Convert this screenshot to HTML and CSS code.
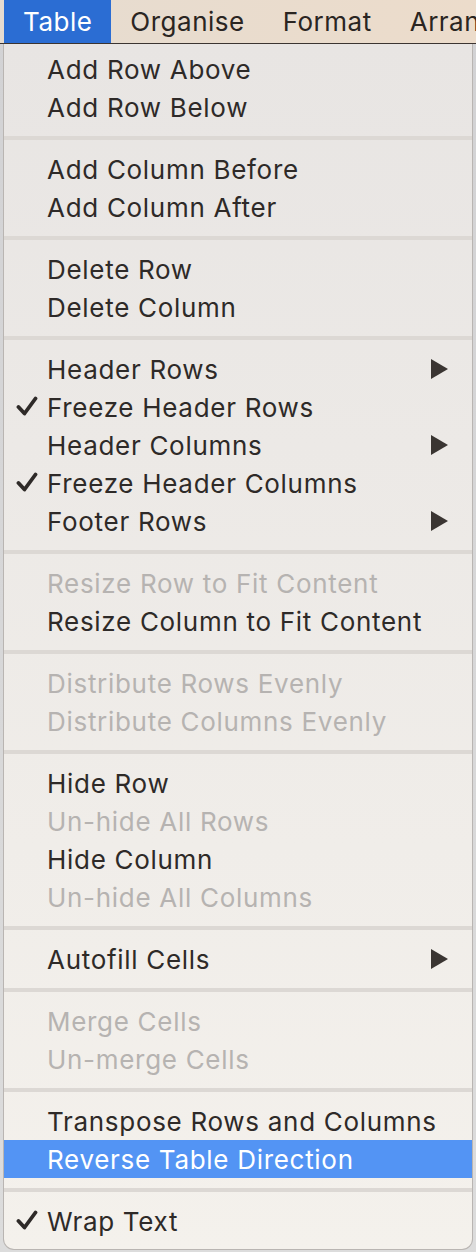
FILE: index.html
```html
<!DOCTYPE html>
<html>
<head>
<meta charset="utf-8">
<link rel="stylesheet" href="styles.css">
</head>
<body>
<div class="menubar">
  <div class="mb-item active">Table</div>
  <div class="mb-item">Organise</div>
  <div class="mb-item">Format</div>
  <div class="mb-item">Arrange</div>
</div>
<div class="menu">
  <div class="item">Add Row Above</div>
  <div class="item">Add Row Below</div>
  <div class="sep"></div>
  <div class="item">Add Column Before</div>
  <div class="item">Add Column After</div>
  <div class="sep"></div>
  <div class="item">Delete Row</div>
  <div class="item">Delete Column</div>
  <div class="sep"></div>
  <div class="item">Header Rows<span class="arrow"></span></div>
  <div class="item"><svg class="check" viewBox="0 0 22 20" width="22" height="20"><path d="M2.5 11 L8.5 17.5 L19.5 2.5" fill="none" stroke="#2e2a28" stroke-width="3.8" stroke-linecap="round" stroke-linejoin="round"/></svg>Freeze Header Rows</div>
  <div class="item">Header Columns<span class="arrow"></span></div>
  <div class="item"><svg class="check" viewBox="0 0 22 20" width="22" height="20"><path d="M2.5 11 L8.5 17.5 L19.5 2.5" fill="none" stroke="#2e2a28" stroke-width="3.8" stroke-linecap="round" stroke-linejoin="round"/></svg>Freeze Header Columns</div>
  <div class="item">Footer Rows<span class="arrow"></span></div>
  <div class="sep"></div>
  <div class="item disabled">Resize Row to Fit Content</div>
  <div class="item">Resize Column to Fit Content</div>
  <div class="sep"></div>
  <div class="item disabled">Distribute Rows Evenly</div>
  <div class="item disabled">Distribute Columns Evenly</div>
  <div class="sep"></div>
  <div class="item">Hide Row</div>
  <div class="item disabled">Un-hide All Rows</div>
  <div class="item">Hide Column</div>
  <div class="item disabled">Un-hide All Columns</div>
  <div class="sep"></div>
  <div class="item">Autofill Cells<span class="arrow"></span></div>
  <div class="sep"></div>
  <div class="item disabled">Merge Cells</div>
  <div class="item disabled">Un-merge Cells</div>
  <div class="sep"></div>
  <div class="item">Transpose Rows and Columns</div>
  <div class="item selected">Reverse Table Direction</div>
  <div class="sep"></div>
  <div class="item"><svg class="check" viewBox="0 0 22 20" width="22" height="20"><path d="M2.5 11 L8.5 17.5 L19.5 2.5" fill="none" stroke="#2e2a28" stroke-width="3.8" stroke-linecap="round" stroke-linejoin="round"/></svg>Wrap Text</div>
</div>
</body>
</html>
```
FILE: styles.css
```css
html, body {
  margin: 0;
  padding: 0;
}
body {
  width: 476px;
  height: 1252px;
  overflow: hidden;
  background: linear-gradient(#d2d2d4, #dcdcdc);
  font-family: Inter, "Liberation Sans", sans-serif;
  font-size: 26px;
  letter-spacing: 0.7px;
  color: #2e2a28;
}
.menubar {
  display: flex;
  height: 44px;
  padding-left: 4px;
  background: linear-gradient(90deg, #e6dcd0, #ecdccb);
  border-bottom: 1px solid #3b3431;
  box-sizing: border-box;
  white-space: nowrap;
  overflow: hidden;
  letter-spacing: 0.5px;
}
.mb-item {
  flex: none;
  padding: 0 19px;
  line-height: 43px;
  color: #2a2522;
}
.mb-item.active {
  background: #2b6dd3;
  color: #fff;
}
.menu {
  margin: 0 3px;
  height: 1206px;
  box-sizing: border-box;
  padding: 6px 0 8px;
  background: linear-gradient(#e8e5e3, #f4f1ec);
  border: 1px solid #b9b5b2;
  border-top: none;
  border-radius: 0 0 11px 11px;
}
.item {
  position: relative;
  display: flex;
  align-items: center;
  height: 38px;
  padding-left: 43px;
  padding-right: 24px;
  white-space: nowrap;
}
.item.disabled {
  color: #b6b3b1;
}
.item.selected {
  background: #5394f4;
  color: #fff;
}
.sep {
  height: 4px;
  margin: 10px 0;
  background: #dcd8d4;
}
.check {
  position: absolute;
  left: 12px;
  top: 8px;
}
.arrow {
  margin-left: auto;
  width: 0;
  height: 0;
  border-top: 10px solid transparent;
  border-bottom: 10px solid transparent;
  border-left: 17px solid #3a3532;
}
```
